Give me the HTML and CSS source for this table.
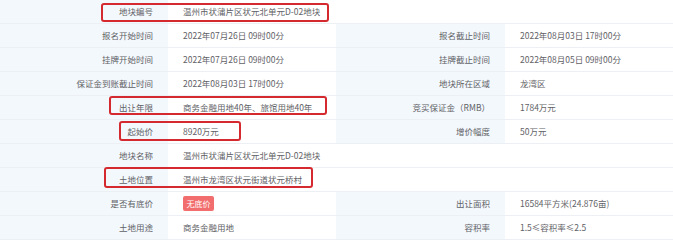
FILE: index.html
```html
<!DOCTYPE html>
<html lang="zh-CN">
<head>
<meta charset="utf-8">
<link rel="stylesheet" href="styles.css">
</head>
<body>
<div class="sheet">
  <div class="grid">
    <div class="lab">地块编号</div><div class="val wide">温州市状蒲片区状元北单元D-02地块</div>
    <div class="lab">报名开始时间</div><div class="val">2022年07月26日 09时00分</div>
    <div class="lab">报名截止时间</div><div class="val">2022年08月03日 17时00分</div>
    <div class="lab">挂牌开始时间</div><div class="val">2022年07月26日 09时00分</div>
    <div class="lab">挂牌截止时间</div><div class="val">2022年08月05日 09时00分</div>
    <div class="lab">保证金到账截止时间</div><div class="val">2022年08月03日 17时00分</div>
    <div class="lab">地块所在区域</div><div class="val">龙湾区</div>
    <div class="lab">出让年限</div><div class="val">商务金融用地40年、旅馆用地40年</div>
    <div class="lab">竞买保证金（RMB）</div><div class="val">1784万元</div>
    <div class="lab">起始价</div><div class="val">8920万元</div>
    <div class="lab">增价幅度</div><div class="val">50万元</div>
    <div class="lab">地块名称</div><div class="val wide">温州市状蒲片区状元北单元D-02地块</div>
    <div class="lab">土地位置</div><div class="val wide">温州市龙湾区状元街道状元桥村</div>
    <div class="lab">是否有底价</div><div class="val"><span class="tag">无底价</span></div>
    <div class="lab">出让面积</div><div class="val">16584平方米(24.876亩)</div>
    <div class="lab">土地用途</div><div class="val">商务金融用地</div>
    <div class="lab">容积率</div><div class="val">1.5≤容积率≤2.5</div>
  </div>
  <div class="mark m1"></div>
  <div class="mark m2"></div>
  <div class="mark m3"></div>
  <div class="mark m4"></div>
</div>
</body>
</html>
```

FILE: styles.css
```css
html, body {
  margin: 0;
  padding: 0;
  background: #fff;
}
body {
  font-family: "Noto Sans CJK SC", "Noto Sans", sans-serif;
  font-size: 8.5px;
  color: #5f6266;
}
.sheet {
  position: relative;
  width: 673px;
  height: 240px;
  overflow: hidden;
}
.grid {
  display: grid;
  grid-template-columns: 168px 168px 169px 168px;
}
.lab, .val {
  box-sizing: border-box;
  height: 24px;
  line-height: 23px;
  border-bottom: 1px solid #eceff4;
  white-space: nowrap;
}
.lab {
  background: #f3f8fd;
  text-align: right;
  padding-right: 15px;
}
.val {
  background: #fff;
  padding-left: 15px;
}
.wide {
  grid-column: span 3;
}
.tag {
  display: inline-block;
  background: #f26d6d;
  color: #fff;
  font-size: 8px;
  line-height: 15px;
  height: 15px;
  padding: 0 3.5px;
  border-radius: 2px;
  vertical-align: middle;
  position: relative;
  top: -1px;
}
.mark {
  position: absolute;
  box-sizing: border-box;
  border: 2px solid #d42a2f;
  border-radius: 3px;
}
.m1 { left: 101px; top: 3px; width: 228px; height: 19px; }
.m2 { left: 109px; top: 96px; width: 218px; height: 19px; }
.m3 { left: 119px; top: 121px; width: 122px; height: 20px; }
.m4 { left: 104px; top: 167px; width: 209px; height: 21px; }
```
